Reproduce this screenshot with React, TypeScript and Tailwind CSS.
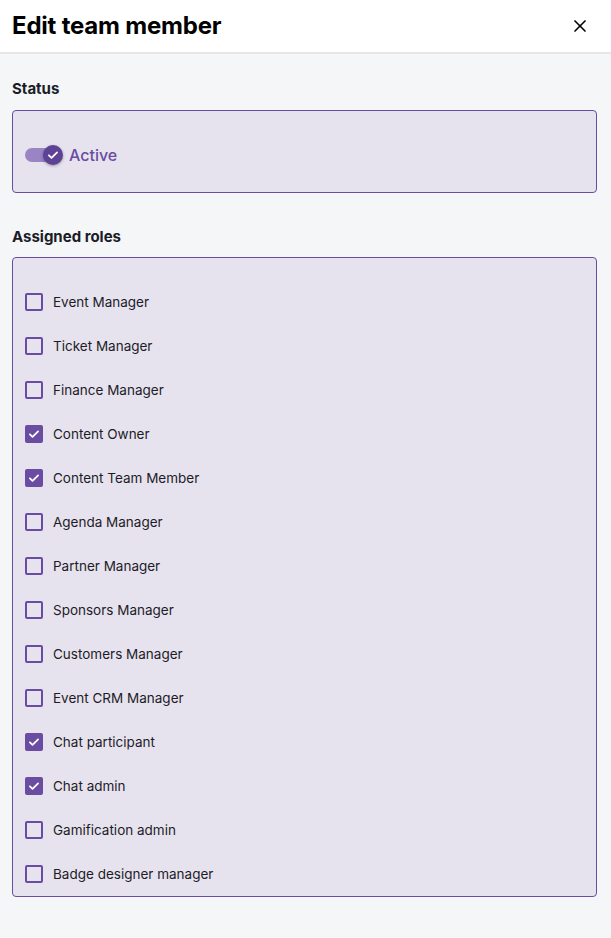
import { X } from 'lucide-react'

const roles = [
  { name: 'Event Manager', on: false },
  { name: 'Ticket Manager', on: false },
  { name: 'Finance Manager', on: false },
  { name: 'Content Owner', on: true },
  { name: 'Content Team Member', on: true },
  { name: 'Agenda Manager', on: false },
  { name: 'Partner Manager', on: false },
  { name: 'Sponsors Manager', on: false },
  { name: 'Customers Manager', on: false },
  { name: 'Event CRM Manager', on: false },
  { name: 'Chat participant', on: true },
  { name: 'Chat admin', on: true },
  { name: 'Gamification admin', on: false },
  { name: 'Badge designer manager', on: false },
]

function Check({ className = '' }: { className?: string }) {
  return (
    <svg viewBox="0 0 24 24" className={className} fill="none" stroke="currentColor" strokeWidth={3} strokeLinecap="round" strokeLinejoin="round">
      <path d="M5 12.5l4.5 4.5L19 7.5" />
    </svg>
  )
}

function Checkbox({ on }: { on: boolean }) {
  return on ? (
    <span className="w-[18px] h-[18px] rounded-[2px] bg-[#6a4ca3] flex items-center justify-center text-white">
      <Check className="w-[14px] h-[14px]" />
    </span>
  ) : (
    <span className="w-[18px] h-[18px] rounded-[2px] border-2 border-[#6a4ca3]" />
  )
}

export default function App() {
  return (
    <div className="min-h-[938px] bg-[#f5f6f8] text-[#1c1c28]" style={{ fontFamily: 'Inter, "Noto Sans", sans-serif' }}>
      <div className="h-[54px] bg-white border-b-2 border-[#e6e6e6] flex items-center justify-between pl-3 pr-[21px]">
        <h1 className="text-[24px] font-bold tracking-[-0.2px] text-black">Edit team member</h1>
        <X className="w-[20px] h-[20px] text-black" strokeWidth={2} />
      </div>

      <div className="pl-3 pr-[14px]">
        <div className="pt-[24px] pb-[9px] text-[15px] font-bold">Status</div>
        <div className="h-[83px] rounded-[4px] border border-[#6a4ca3] bg-[#e7e3ee] px-3 pt-[22px]">
          <div className="h-[44px] flex items-center">
            <div className="relative w-[37px] h-[14px] rounded-full bg-[#9a84c4] mr-[7px]">
              <span className="absolute -right-[1px] top-1/2 -translate-y-1/2 w-[20px] h-[20px] rounded-full bg-[#5e4296] shadow-[0_1px_3px_rgba(0,0,0,0.35)] flex items-center justify-center text-white">
                <Check className="w-[14px] h-[14px]" />
              </span>
            </div>
            <span className="text-[16px] font-medium text-[#6a4ca3]">Active</span>
          </div>
        </div>

        <div className="pt-[33px] pb-[9px] text-[15px] font-bold">Assigned roles</div>
        <div className="rounded-[4px] border border-[#6a4ca3] bg-[#e7e3ee] px-3 pt-[22px]">
          {roles.map((r) => (
            <div key={r.name} className="h-[44px] flex items-center gap-[10px]">
              <Checkbox on={r.on} />
              <span className="text-[13.5px]">{r.name}</span>
            </div>
          ))}
        </div>
      </div>
    </div>
  )
}
